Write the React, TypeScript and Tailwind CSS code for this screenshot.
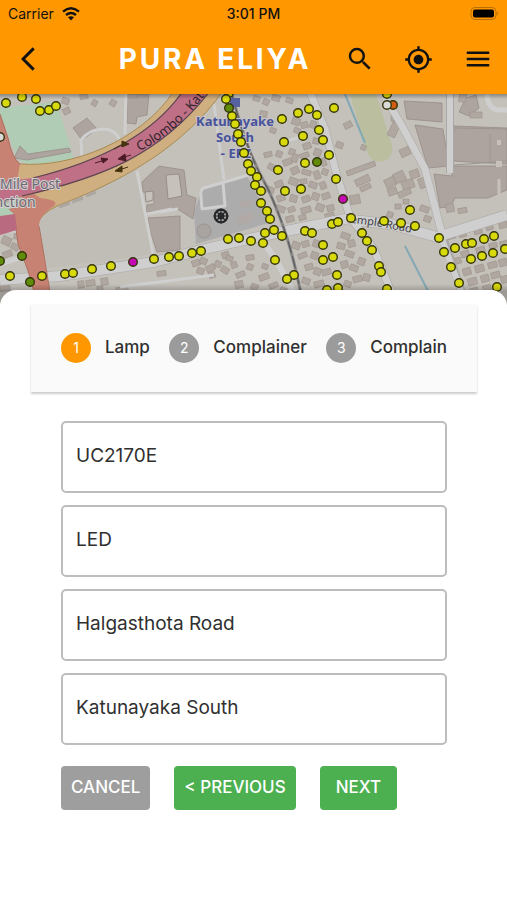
import React from 'react';
import { MdArrowBackIosNew, MdGpsFixed, MdMenu, MdSearch } from 'react-icons/md';

type Point = [number, number];

const steps = ['Lamp', 'Complainer', 'Complain'];

const fields = [
  { id: 'lampId', label: 'Lamp number', value: 'UC2170E' },
  { id: 'lampType', label: 'Lamp type', value: 'LED' },
  { id: 'road', label: 'Road', value: 'Halgasthota Road' },
  { id: 'area', label: 'Area', value: 'Katunayaka South' },
];

const yellowLamps: Point[] = [
  [6, 9], [22, 3], [36, 5], [40, 17], [49, 16], [56, 12],
  [10, 182], [42, 182], [65, 180], [73, 179], [92, 175], [111, 172], [154, 165], [169, 163],
  [179, 162], [192, 159], [201, 157], [228, 145], [239, 144], [251, 147], [263, 149], [265, 139],
  [229, -1], [226, 5], [232, 22], [235, 30], [238, 40], [241, 48], [244, 59], [248, 70], [251, 77],
  [257, 83], [255, 91], [261, 97], [261, 109], [267, 117], [270, 125], [274, 136], [282, 142],
  [282, 25], [298, 19], [309, 15], [317, 21], [334, 14], [319, 36], [303, 42], [284, 48],
  [323, 46], [329, 61], [305, 69], [278, 76], [285, 97], [301, 95], [336, 85],
  [305, 137], [312, 139], [332, 130], [338, 128], [323, 151], [323, 166], [333, 163],
  [275, 166], [294, 181], [287, 185], [337, 181], [338, 194], [327, 196],
  [387, 0], [410, 116], [351, 124], [384, 127], [401, 129], [415, 132],
  [362, 139], [367, 147], [372, 156], [379, 172], [381, 178], [387, 195],
  [439, 144], [444, 158], [455, 154], [466, 150], [472, 149], [484, 145], [494, 142],
  [471, 165], [482, 162], [493, 159], [505, 155], [451, 173], [459, 189], [497, 193],
];

const greenLamps: Point[] = [[22, 162], [0, 167], [30, 188], [229, 14], [317, 68]];
const magentaLamps: Point[] = [[133, 168], [343, 105]];

// x, y, width, height, rotation
const houses: [number, number, number, number, number][] = [
  [62, 4, 7, 6, 20], [63, 14, 7, 6, -25], [80, 0, 8, 5, -10], [92, 6, 5, 6, 30], [110, 6, 6, 6, 30],
  [2, 143, 9, 8, 25], [11, 150, 8, 6, 30], [3, 157, 9, 6, -20], [14, 140, 5, 5, 10],
  [78, 187, 6, 7, -8], [86, 186, 9, 6, -8], [101, 184, 7, 7, -8], [97, 192, 6, 5, -8], [157, 177, 9, 5, -8],
  [116, 193, 12, 4, -8], [0, 192, 10, 5, -5],
  [192, 166, 8, 6, -20], [200, 164, 7, 6, 25], [206, 171, 9, 6, -25], [215, 167, 6, 6, 20], [222, 158, 7, 6, -20],
  [197, 174, 7, 6, 20], [209, 178, 6, 6, -20], [221, 173, 8, 6, 30], [231, 168, 6, 6, -20], [226, 162, 7, 5, 20],
  [236, 178, 9, 5, -20], [247, 170, 6, 6, 20], [259, 180, 10, 6, -20], [251, 190, 7, 6, 20], [235, 187, 8, 7, -10],
  [269, 189, 9, 5, -20], [280, 194, 8, 5, 20], [262, 170, 6, 5, 20], [246, 161, 8, 5, -10],
  [253, 2, 7, 5, 15], [263, 5, 6, 6, 25], [272, 1, 8, 6, 15], [286, 4, 7, 5, 20], [260, 17, 7, 6, 10],
  [292, 24, 8, 7, 20], [301, 28, 7, 6, -15], [310, 27, 6, 7, 20], [270, 34, 6, 5, 20], [294, 34, 6, 5, 20],
  [303, 49, 8, 6, -20], [313, 44, 6, 6, 10], [289, 55, 6, 6, 20], [264, 58, 8, 5, -15], [276, 57, 6, 6, 20],
  [283, 65, 9, 6, -20], [292, 60, 6, 8, 20], [300, 59, 9, 5, -20], [314, 55, 7, 7, 20], [321, 64, 5, 8, -20],
  [268, 70, 7, 6, 30], [291, 73, 8, 7, -25], [302, 76, 9, 5, 15], [314, 77, 6, 8, -20], [322, 75, 6, 6, 20],
  [275, 87, 8, 6, -20], [289, 84, 9, 7, 20], [300, 85, 7, 5, -10], [309, 88, 8, 6, 20], [320, 88, 6, 7, -20],
  [267, 93, 7, 6, 20], [277, 101, 8, 6, -20], [290, 101, 7, 7, 15], [302, 102, 8, 6, -20], [312, 99, 7, 7, 20],
  [322, 99, 8, 6, -20], [276, 112, 9, 6, 20], [288, 113, 7, 5, -20], [301, 113, 10, 6, -15], [316, 110, 8, 7, 20],
  [327, 111, 7, 6, -15], [286, 122, 8, 6, -15], [299, 121, 7, 5, -15], [325, 119, 9, 5, -15],
  [292, 148, 8, 7, 20], [302, 147, 7, 6, -15], [313, 146, 6, 7, 20], [298, 159, 9, 5, -20], [311, 158, 7, 7, 20],
  [305, 170, 8, 6, -15], [314, 174, 7, 7, 20], [322, 175, 9, 6, -15], [302, 184, 8, 6, 20], [314, 187, 10, 6, -15],
  [341, 139, 9, 6, 20], [348, 146, 7, 7, -15], [337, 149, 8, 6, 15], [345, 157, 9, 6, 20], [341, 167, 7, 7, -15],
  [350, 171, 8, 6, 20], [358, 164, 7, 7, 20], [353, 182, 9, 6, -15], [344, 187, 7, 6, 20], [363, 180, 7, 7, 15],
  [344, 28, 8, 6, -25], [336, 48, 7, 6, 20], [361, 51, 5, 5, 20], [390, 28, 8, 15, 25], [400, 54, 10, 8, -25],
  [391, 22, 7, 5, 0], [346, 72, 30, 5, -20], [355, 83, 15, 7, -25], [360, 91, 11, 5, -25], [350, 101, 10, 9, -10],
  [385, 84, 10, 9, -25], [394, 78, 11, 10, -25], [402, 86, 12, 9, -20], [388, 94, 9, 7, -20], [410, 76, 9, 8, -20],
  [419, 84, 7, 10, -20], [398, 96, 13, 6, -25], [403, 105, 6, 5, 0], [395, 110, 6, 5, 0], [420, 112, 9, 6, 20],
  [424, 122, 7, 6, 20], [446, 110, 8, 8, -10], [458, 114, 9, 5, -10], [387, 118, 6, 5, 20],
  [447, 139, 8, 6, -15], [459, 137, 7, 6, -15], [474, 134, 8, 6, -15], [486, 131, 7, 5, -15], [499, 128, 8, 6, -15],
  [452, 164, 9, 6, -15], [461, 157, 8, 6, -15], [476, 153, 9, 6, -15], [489, 149, 8, 5, -15], [500, 147, 8, 6, -15],
  [463, 174, 8, 7, -15], [475, 171, 9, 7, -15], [488, 168, 9, 6, -15], [499, 165, 8, 7, -15], [468, 184, 9, 7, -15],
  [481, 181, 8, 7, -15], [491, 178, 9, 6, -15], [470, 194, 8, 6, -15], [483, 191, 8, 6, -15], [501, 182, 7, 7, -15],
  [128, 0, 9, 4, 0], [459, 0, 7, 8, 10], [470, 18, 12, 6, 0],
];

const LampDots: React.FC<{ points: Point[]; color: string }> = ({ points, color }) => (
  <g fill={color} stroke="#34350a" strokeWidth="1.4">
    {points.map(([x, y]) => (
      <circle key={`${x}-${y}`} cx={x} cy={y} r="4.3" />
    ))}
  </g>
);

const StreetMap: React.FC = () => (
  <svg
    className="block w-full bg-[#c4c0ba]"
    viewBox="0 0 507 211"
    preserveAspectRatio="xMidYMin slice"
    role="img"
    aria-label="Street lamp map"
  >
    <defs>
      <linearGradient id="barShadow" x1="0" y1="0" x2="0" y2="1">
        <stop offset="0" stopColor="#000" stopOpacity="0.3" />
        <stop offset="1" stopColor="#000" stopOpacity="0" />
      </linearGradient>
      <linearGradient id="sheetShadow" x1="0" y1="0" x2="0" y2="1">
        <stop offset="0" stopColor="#000" stopOpacity="0" />
        <stop offset="1" stopColor="#000" stopOpacity="0.2" />
      </linearGradient>
    </defs>

    {/* land use */}
    <path d="M0 14 L56 8 L66 38 L74 66 L38 74 L18 66 L0 20Z" fill="#b0ccb5" />
    <path d="M0 116 L40 104 L28 120 L0 124Z" fill="#b0ccb5" />
    <path d="M44 112 L134 76 L146 120 L153 160 L48 174 L39 136Z" fill="#bfbdb6" />
    <path d="M202 95 L247 82 L272 128 L196 150 L194 118Z" fill="#acacad" />
    <path d="M350 0 L376 0 L391 48 Q396 65 380 68 Q372 68 368 60 L360 34Z" fill="#bbbf9f" />
    <path d="M345 0 L365 49 M405 152 L429 199" fill="none" stroke="#83a9b4" strokeWidth="2" />

    {/* large buildings */}
    <g fill="#ada39f" stroke="#988d88" strokeWidth="0.8">
      <path d="M73 34 L87 24 L97 35 L82 46Z" />
      <path d="M14 64 L20 52 L28 60 L69 54 L71 58 L27 66Z" />
      <path d="M127 0 L149 0 L147 21 L137 23 L136 30 L127 29Z" />
      <path d="M142 88 L159 72 L184 76 L187 101 L196 104 L193 125 L179 116 L146 118 L147 111 L154 110 L154 99 L143 98Z" />
      <path d="M148 124 L180 122 L180 156 L157 158 L149 134Z" />
      <path d="M404 7 L442 9 L442 28 L407 25Z" />
      <path d="M415 31 L443 35 L449 72 L428 74Z" />
      <path d="M454 32 L507 34 L507 70 L452 67Z" />
      <path d="M452 72 L507 72 L507 96 L488 104 L455 104 L451 112 L440 114 L434 80 L452 82Z" />
      <path d="M466 4 L476 1 L479 14 L469 22 L459 18Z" />
    </g>
    <path d="M166 81 L179 80 L182 102 L168 105Z M145 98 L153 97 L153 106 L146 108Z" fill="#c6c1bb" stroke="#988d88" />
    <path d="M454 34 L507 35 M454 71 L507 67 M490 40 L490 68" stroke="#9e9590" fill="none" />
    <rect x="497" y="46" width="4" height="5" fill="#c6c1bb" />
    <rect x="496" y="67" width="6" height="6" fill="#c6c1bb" />
    <path d="M499 85 V102" stroke="#c6c1bb" strokeWidth="3" />
    <circle cx="204" cy="137" r="7" fill="#aaa4a0" stroke="#9b948f" />
    <path d="M235 124 L252 118 L255 125 L239 131Z M239 108 L250 104 L253 111 L242 114Z" fill="#b0a9a5" />
    <g fill="#b0a7a1" stroke="#9c928a" strokeWidth="0.6">
      {houses.map(([x, y, w, h, r]) => (
        <rect key={`${x}-${y}`} x={x} y={y} width={w} height={h} transform={`rotate(${r} ${x + w / 2} ${y + h / 2})`} />
      ))}
    </g>

    {/* local streets */}
    <g fill="none" strokeLinejoin="round">
      <g stroke="#aaa8a5">
        <path d="M0 186 L60 182 L154 168 L205 155 L262 142 L350 124 M352 126 L390 130 L437 143 L507 121" strokeWidth="11" />
        <path d="M310 -2 L325 35 L336 78 L350 123 L374 155 L394 205" strokeWidth="8" />
        <path d="M385 3 L402 32 L425 75 L442 140 L464 205" strokeWidth="8" />
        <path d="M450 0 V79" strokeWidth="8" />
      </g>
      <g stroke="#cfcfcf">
        <path d="M0 186 L60 182 L154 168 L205 155 L262 142 L350 124 M352 126 L390 130 L437 143 L507 121" strokeWidth="10" />
        <path d="M310 -2 L325 35 L336 78 L350 123 L374 155 L394 205" strokeWidth="7" />
        <path d="M385 3 L402 32 L425 75 L442 140" strokeWidth="7" />
        <path d="M450 0 V79" strokeWidth="6" />
        <path d="M442 145 L464 205" strokeWidth="6" />
        <path d="M262 146 L276 166 L297 205" strokeWidth="6" />
        <path d="M0 170 L22 163 M0 136 H18" strokeWidth="5" />
        <path d="M487 0 Q488 16 500 16 H507" strokeWidth="5" />
        <path d="M82 64 L81 46 Q89 35 104 35 Q117 36 120 48" strokeWidth="3" />
        <path d="M126 0 L125 40 M137 77 L153 160 M147 120 L172 115" strokeWidth="3" />
        <path d="M214 10 L224 86 M252 80 L204 94 Q200 95 201 103 L202 115 L225 112 L223 89" strokeWidth="3" />
        <path d="M160 118 L178 115 M120 193 L214 181 M284 48 L303 42" strokeWidth="3" />
      </g>
    </g>

    {/* trunk road, ramps and expressway */}
    <path
      d="M0 23 L8 46 Q12 66 20 70 C70 74 140 48 174 -3 L223 -3 C185 50 130 83 67 108 Q44 116 38 128 L20 116 L0 100Z"
      fill="#cfae7f"
      stroke="#a98b52"
    />
    <path
      d="M0 20 L8 44 Q12 64 20 70 L17 88 L40 104 Q60 106 54 112 Q38 122 39 134 Q44 160 51 205 L36 205 Q29 176 18 150 L14 120 L0 108Z"
      fill="#c78273"
    />
    <path d="M0 20 L8 44 Q12 64 20 70 M39 132 Q44 160 51 205 M14 120 L18 150 Q29 176 36 205" fill="none" stroke="#ad705f" />
    <path d="M0 111 L22 103 L18 112 L0 118Z" fill="#b0ccb5" />
    <path d="M0 122 L15 120 L17 136 L0 141Z" fill="#b96a80" />
    <path d="M-2 88 L33 84 C90 70 150 45 183 -3 L210 -3 C160 62 100 84 22 102 L-2 111Z" fill="#bf6f86" />
    <path
      d="M33 84 C90 70 150 45 183 -3 M22 102 C100 84 160 62 210 -3"
      fill="none"
      stroke="#604653"
      strokeWidth="1.2"
    />
    <path d="M59 113 L70 109 M72 108 L83 104 M86 102 L96 98" stroke="#aca7a0" strokeWidth="3" />
    <g stroke="#4b1b28" fill="#4b1b28">
      <path d="M95 69 L105 66 M101 64 L108 65 L103 69Z" />
      <path d="M131 61 L121 64 M125 60 L118 65 L126 67Z" />
    </g>
    <g stroke="#43330f" fill="#43330f">
      <path d="M128 73 L119 76 M122 72 L115 77 L122 78Z" />
      <path d="M114 55 L122 51 M122 47 L129 50 L122 53Z" />
    </g>
    <path id="colombo" d="M139 57 C164 46 186 26 209 -4" fill="none" />
    <text className="font-['Noto_Sans']" fontSize="13" fill="#30252b">
      <textPath href="#colombo">Colombo - Kat</textPath>
    </text>

    {/* railway */}
    <path d="M231 -2 C244 44 252 67 268 95 C284 130 293 159 302 205" fill="none" stroke="#858585" strokeWidth="3" />
    <path d="M231 -2 C244 44 252 67 268 95 C284 130 293 159 302 205" fill="none" stroke="#555" strokeWidth="1" strokeDasharray="12 4" />
    <rect x="230" y="4" width="10" height="9" fill="#5661a0" />

    {/* place names */}
    <g className="font-['Noto_Sans']" fontSize="14" fill="#6b6872" stroke="#d4d1d0" strokeWidth="2" paintOrder="stroke">
      <text x="0" y="95">Mile Post</text>
      <text x="-18" y="113">Junction</text>
    </g>
    <g className="font-['Noto_Sans']" fontSize="13" fontWeight="700" fill="#46539b" stroke="#c6c3c4" strokeWidth="2" paintOrder="stroke" textAnchor="middle">
      <text x="235" y="32">Katunayake</text>
      <text x="235" y="48">South</text>
      <text x="236" y="64">- EPZ</text>
    </g>
    <path id="temple" d="M345 128 L376 132 L412 139" fill="none" />
    <text className="font-['Noto_Sans']" fontSize="11" fill="#42424a">
      <textPath href="#temple">Temple Road</textPath>
    </text>

    <LampDots points={yellowLamps} color="#d9da0c" />
    <LampDots points={greenLamps} color="#618c09" />
    <LampDots points={magentaLamps} color="#c408b3" />
    <LampDots points={[[393, 11]]} color="#d45c12" />
    <LampDots points={[[387, 11], [0, 43]]} color="#d9d9d9" />

    <g fill="none" stroke="#262728">
      <circle cx="221" cy="122" r="6.3" strokeWidth="2.2" />
      <circle cx="221" cy="122" r="2.4" strokeWidth="2" />
      <path d="M221 114.500 V129.500 M213.500 122 H228.500 M216 117 L226 127 M226 117 L216 127" strokeWidth="1.2" />
    </g>

    <rect width="507" height="5" fill="url(#barShadow)" />
    <rect y="190" width="507" height="7" fill="url(#sheetShadow)" />
    <rect y="197" width="507" height="14" opacity="0.2" />
  </svg>
);

const StatusBar: React.FC = () => (
  <div className="grid h-7 grid-cols-3 items-center px-2 text-sm">
    <div className="flex items-center gap-2">
      <span>Carrier</span>
      <svg width="18" height="14" viewBox="0 0 18 14" aria-hidden="true">
        <g fill="none" stroke="#111" strokeWidth="2.300">
          <path d="M1 4.600 Q9 -2 17 4.600" />
          <path d="M4 8 Q9 4 14 8" />
        </g>
        <path d="M6 10.300 Q9 8 12 10.300 L9 13.500Z" fill="#111" />
      </svg>
    </div>
    <span className="text-center font-medium">3:01 PM</span>
    <svg className="justify-self-end" width="30" height="14" viewBox="0 0 30 14" aria-hidden="true">
      <rect x="2" y="0.500" width="25" height="12" rx="4" fill="none" stroke="#b86e00" />
      <rect x="4" y="2.500" width="21" height="8" rx="2" />
      <path d="M28 4.500 Q30 6.500 28 8.500Z" fill="#b86e00" />
    </svg>
  </div>
);

const Header: React.FC = () => (
  <header className="bg-[#ff9800] text-[#111]">
    <StatusBar />
    <div className="flex h-[66px] items-center pb-1">
      <button type="button" aria-label="Back" className="flex w-14 justify-center">
        <MdArrowBackIosNew size={28} />
      </button>
      <h1 className="flex-1 whitespace-nowrap pl-11 text-center text-[28px] font-bold tracking-widest text-white">
        PURA ELIYA
      </h1>
      <button type="button" aria-label="Search" className="flex w-[59px] justify-center">
        <MdSearch size={30} />
      </button>
      <button type="button" aria-label="My location" className="flex w-[59px] justify-center">
        <MdGpsFixed size={29} />
      </button>
      <button type="button" aria-label="Menu" className="flex w-[59px] justify-center">
        <MdMenu size={30} />
      </button>
    </div>
  </header>
);

const Stepper: React.FC = () => (
  <ol className="flex items-center justify-between bg-[#fafafa] px-[30px] py-[29px] shadow-[0_2px_2px_rgba(0,0,0,0.2)]">
    {steps.map((step, index) => (
      <li key={step} className="flex items-center gap-[14px]">
        <span
          className={`flex size-[30px] items-center justify-center rounded-full text-sm text-white ${
            index === 0 ? 'bg-[#ff9800]' : 'bg-[#9b9b9b]'
          }`}
        >
          {index + 1}
        </span>
        <span className="text-[17px] font-medium">{step}</span>
      </li>
    ))}
  </ol>
);

const App: React.FC = () => {
  return (
    <div className="min-h-screen bg-white font-['Inter',sans-serif] text-[#303030]">
      <Header />
      <StreetMap />
      <main className="relative -mt-[15px] rounded-t-2xl bg-white pt-[14px] pr-[30px] pb-8 pl-[31px]">
        <Stepper />
        <form className="px-[30px] pt-[29px]">
          <div className="flex flex-col gap-3">
            {fields.map(({ id, label, value }) => (
              <input
                key={id}
                id={id}
                aria-label={label}
                defaultValue={value}
                className="h-[72px] w-full rounded-[5px] border-2 border-[#bdbdbd] px-[13px] pb-1 text-[19px]"
              />
            ))}
          </div>
          <div className="flex gap-6 pt-[21px] text-[17px] font-medium text-white">
            <button type="button" className="h-11 rounded bg-[#9e9e9e] px-[10px]">
              CANCEL
            </button>
            <button type="button" className="h-11 whitespace-nowrap rounded bg-[#4caf50] px-[10px]">
              &lt; PREVIOUS
            </button>
            <button type="button" className="h-11 rounded bg-[#4caf50] px-4">
              NEXT
            </button>
          </div>
        </form>
      </main>
    </div>
  );
};

export default App;
